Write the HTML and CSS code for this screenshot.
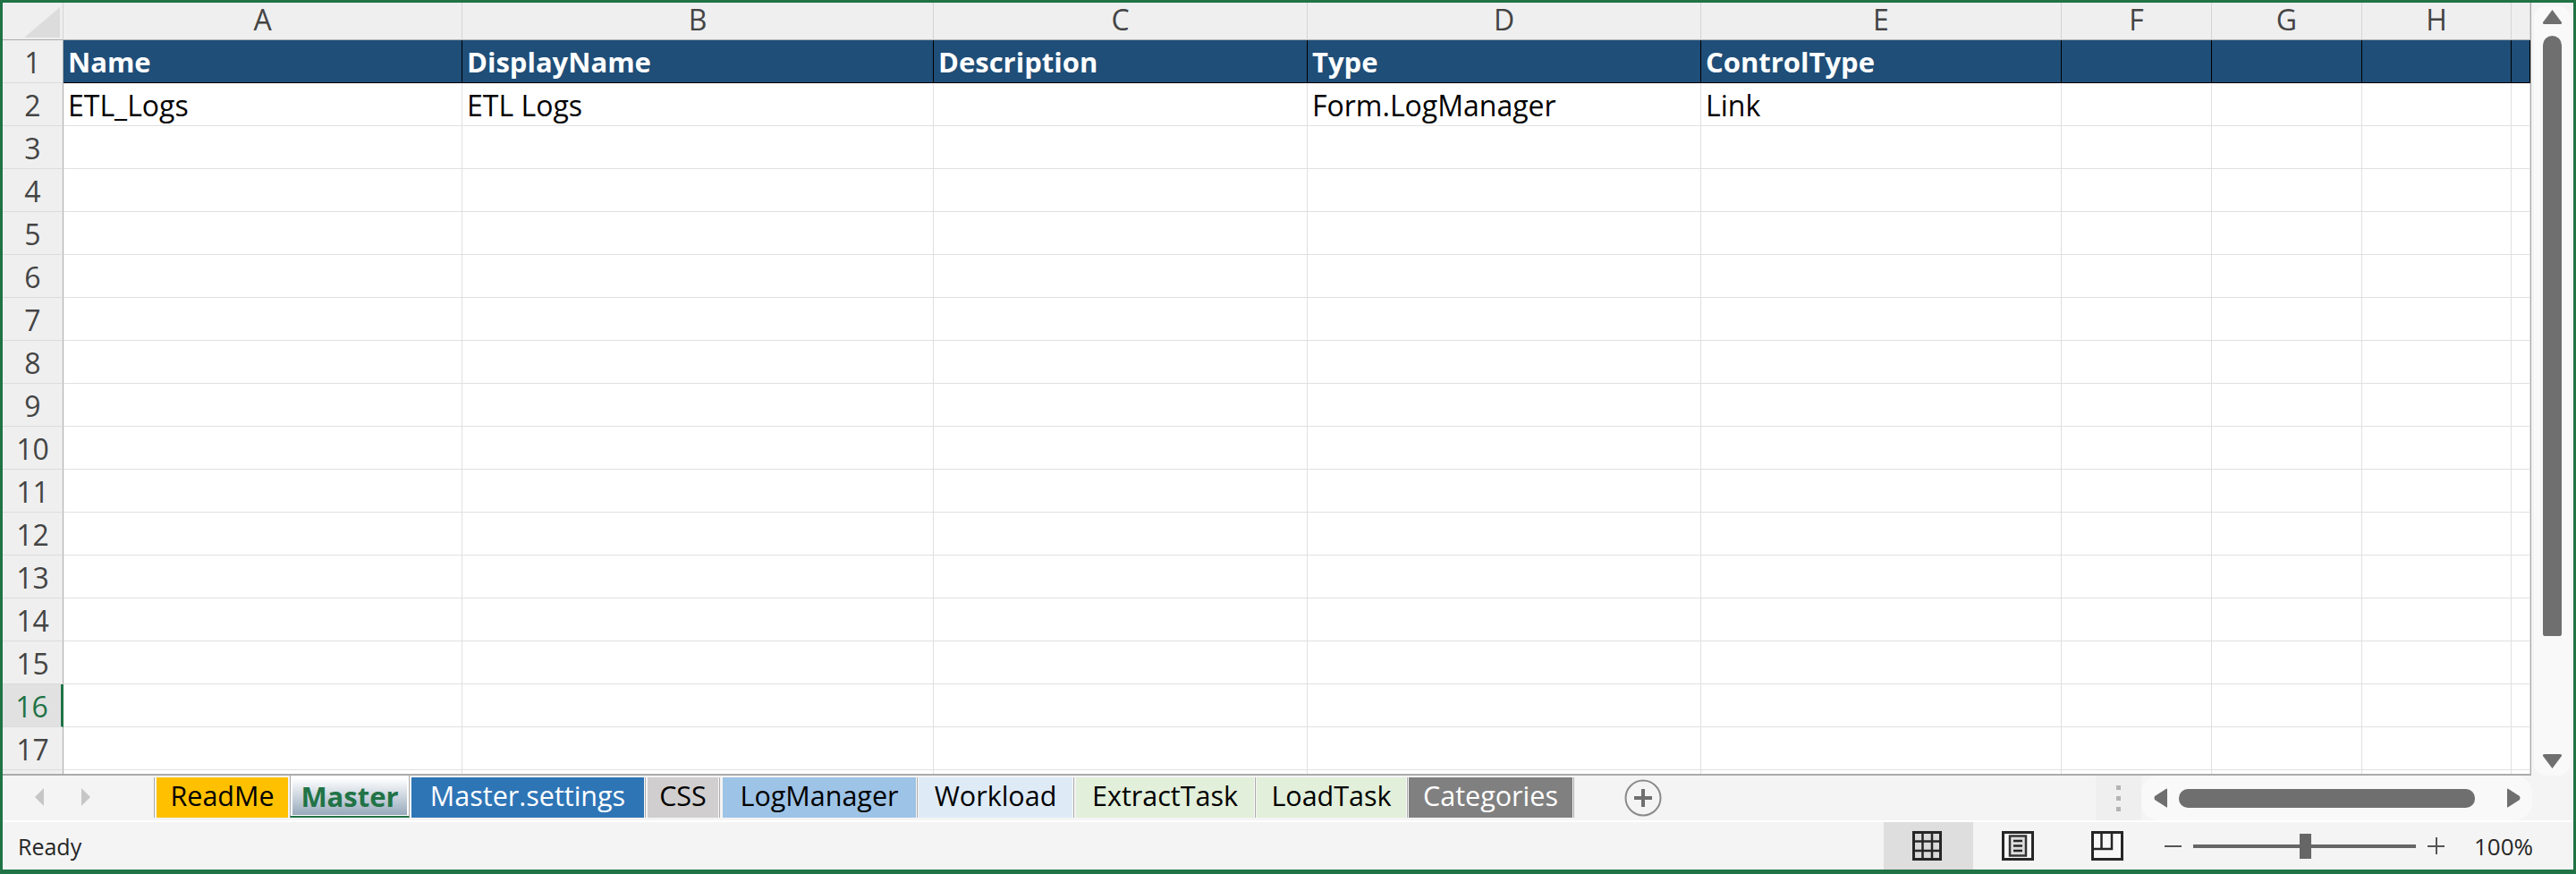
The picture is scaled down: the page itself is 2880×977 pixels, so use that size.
FILE: index.html
```html
<!DOCTYPE html>
<html lang="en">
<head>
  <meta charset="UTF-8">
  <meta name="viewport" content="width=device-width, initial-scale=1.0">
  <title>Master - Excel</title>
  <link rel="stylesheet" href="styles.css">
</head>
<body>
<div class="window">
  <div class="sheet-area">
    <div class="grid">
      <div class="corner"><span class="corner-tri"></span></div>
      <div class="col-head">A</div>
      <div class="col-head">B</div>
      <div class="col-head">C</div>
      <div class="col-head">D</div>
      <div class="col-head">E</div>
      <div class="col-head">F</div>
      <div class="col-head">G</div>
      <div class="col-head">H</div>
      <div class="col-head"></div>

      <div class="row-head">1</div>
      <div class="cell title">Name</div>
      <div class="cell title">DisplayName</div>
      <div class="cell title">Description</div>
      <div class="cell title">Type</div>
      <div class="cell title">ControlType</div>
      <div class="cell title"></div>
      <div class="cell title"></div>
      <div class="cell title"></div>
      <div class="cell title"></div>

      <div class="row-head">2</div>
      <div class="cell">ETL_Logs</div>
      <div class="cell">ETL Logs</div>
      <div class="cell"></div>
      <div class="cell">Form.LogManager</div>
      <div class="cell">Link</div>
      <div class="cell"></div>
      <div class="cell"></div>
      <div class="cell"></div>
      <div class="cell"></div>

      <div class="row-head">3</div><div class="cell"></div><div class="cell"></div><div class="cell"></div><div class="cell"></div><div class="cell"></div><div class="cell"></div><div class="cell"></div><div class="cell"></div><div class="cell"></div>
      <div class="row-head">4</div><div class="cell"></div><div class="cell"></div><div class="cell"></div><div class="cell"></div><div class="cell"></div><div class="cell"></div><div class="cell"></div><div class="cell"></div><div class="cell"></div>
      <div class="row-head">5</div><div class="cell"></div><div class="cell"></div><div class="cell"></div><div class="cell"></div><div class="cell"></div><div class="cell"></div><div class="cell"></div><div class="cell"></div><div class="cell"></div>
      <div class="row-head">6</div><div class="cell"></div><div class="cell"></div><div class="cell"></div><div class="cell"></div><div class="cell"></div><div class="cell"></div><div class="cell"></div><div class="cell"></div><div class="cell"></div>
      <div class="row-head">7</div><div class="cell"></div><div class="cell"></div><div class="cell"></div><div class="cell"></div><div class="cell"></div><div class="cell"></div><div class="cell"></div><div class="cell"></div><div class="cell"></div>
      <div class="row-head">8</div><div class="cell"></div><div class="cell"></div><div class="cell"></div><div class="cell"></div><div class="cell"></div><div class="cell"></div><div class="cell"></div><div class="cell"></div><div class="cell"></div>
      <div class="row-head">9</div><div class="cell"></div><div class="cell"></div><div class="cell"></div><div class="cell"></div><div class="cell"></div><div class="cell"></div><div class="cell"></div><div class="cell"></div><div class="cell"></div>
      <div class="row-head">10</div><div class="cell"></div><div class="cell"></div><div class="cell"></div><div class="cell"></div><div class="cell"></div><div class="cell"></div><div class="cell"></div><div class="cell"></div><div class="cell"></div>
      <div class="row-head">11</div><div class="cell"></div><div class="cell"></div><div class="cell"></div><div class="cell"></div><div class="cell"></div><div class="cell"></div><div class="cell"></div><div class="cell"></div><div class="cell"></div>
      <div class="row-head">12</div><div class="cell"></div><div class="cell"></div><div class="cell"></div><div class="cell"></div><div class="cell"></div><div class="cell"></div><div class="cell"></div><div class="cell"></div><div class="cell"></div>
      <div class="row-head">13</div><div class="cell"></div><div class="cell"></div><div class="cell"></div><div class="cell"></div><div class="cell"></div><div class="cell"></div><div class="cell"></div><div class="cell"></div><div class="cell"></div>
      <div class="row-head">14</div><div class="cell"></div><div class="cell"></div><div class="cell"></div><div class="cell"></div><div class="cell"></div><div class="cell"></div><div class="cell"></div><div class="cell"></div><div class="cell"></div>
      <div class="row-head">15</div><div class="cell"></div><div class="cell"></div><div class="cell"></div><div class="cell"></div><div class="cell"></div><div class="cell"></div><div class="cell"></div><div class="cell"></div><div class="cell"></div>
      <div class="row-head active">16</div><div class="cell"></div><div class="cell"></div><div class="cell"></div><div class="cell"></div><div class="cell"></div><div class="cell"></div><div class="cell"></div><div class="cell"></div><div class="cell"></div>
      <div class="row-head">17</div><div class="cell"></div><div class="cell"></div><div class="cell"></div><div class="cell"></div><div class="cell"></div><div class="cell"></div><div class="cell"></div><div class="cell"></div><div class="cell"></div>
      <div class="row-head stub"></div><div class="cell stub"></div><div class="cell stub"></div><div class="cell stub"></div><div class="cell stub"></div><div class="cell stub"></div><div class="cell stub"></div><div class="cell stub"></div><div class="cell stub"></div><div class="cell stub"></div>
    </div>
    <div class="vscroll">
      <svg class="varrow" width="23" height="18" viewBox="0 0 23 18"><path d="M11.500 1 L22 15 Q22.500 17 20 17 L3 17 Q0.500 17 1 15 Z" fill="#6f6f6f"/></svg>
      <div class="vthumb"></div>
      <svg class="varrow down" width="23" height="18" viewBox="0 0 23 18"><path d="M11.500 17 L22 3 Q22.500 1 20 1 L3 1 Q0.500 1 1 3 Z" fill="#6f6f6f"/></svg>
    </div>
  </div>

  <div class="tabbar">
    <div class="tab-nav">
      <svg width="10" height="20" viewBox="0 0 10 20"><path d="M10 0 V20 L0 10 Z" fill="#c6c6c6"/></svg>
      <svg width="10" height="20" viewBox="0 0 10 20"><path d="M0 0 V20 L10 10 Z" fill="#c6c6c6"/></svg>
    </div>
    <div class="tabs">
      <div class="tab tab-readme">ReadMe</div>
      <div class="tab tab-master">Master</div>
      <div class="tab tab-settings">Master.settings</div>
      <div class="tab tab-css">CSS</div>
      <div class="tab tab-log">LogManager</div>
      <div class="tab tab-workload">Workload</div>
      <div class="tab tab-extract">ExtractTask</div>
      <div class="tab tab-load">LoadTask</div>
      <div class="tab tab-cat">Categories</div>
    </div>
    <svg class="add-sheet" width="42" height="42" viewBox="0 0 42 42">
      <circle cx="21" cy="21" r="19.500" fill="none" stroke="#8a8a8a" stroke-width="2"/>
      <path d="M21 11 V31 M11 21 H31" stroke="#6f6f6f" stroke-width="4"/>
    </svg>
    <div class="tab-split"><i></i><i></i><i></i></div>
    <div class="hscroll">
      <svg width="15" height="22" viewBox="0 0 15 22"><path d="M15 1 V21 Q15 22 13.500 21 L1 13 Q0 11 1 9 L13.500 1 Q15 0 15 1 Z" fill="#6f6f6f"/></svg>
      <div class="hthumb"></div>
      <svg width="15" height="22" viewBox="0 0 15 22"><path d="M0 1 V21 Q0 22 1.500 21 L14 13 Q15 11 14 9 L1.500 1 Q0 0 0 1 Z" fill="#6f6f6f"/></svg>
    </div>
  </div>

  <div class="statusbar">
    <div class="status-text">Ready</div>
    <div class="view-btn on">
      <svg class="icon-normal" width="33" height="33" viewBox="0 0 33 33">
        <rect x="1.500" y="1.500" width="30" height="30" fill="#d9d9d9" stroke="#262626" stroke-width="3"/>
        <path d="M11.500 1 V32 M22 1 V32 M1 11.500 H32 M1 22 H32" stroke="#262626" stroke-width="2.500"/>
      </svg>
    </div>
    <div class="view-btn">
      <svg width="36" height="33" viewBox="0 0 36 33">
        <rect x="1.500" y="1.500" width="33" height="30" fill="#f8f8f8" stroke="#262626" stroke-width="3"/>
        <rect x="9" y="5.500" width="18" height="22" fill="#dcdcdc" stroke="#333" stroke-width="2.500"/>
        <path d="M13 11 H23 M13 16.500 H23 M13 22 H23" stroke="#262626" stroke-width="2.500"/>
      </svg>
    </div>
    <div class="view-btn">
      <svg width="36" height="33" viewBox="0 0 36 33">
        <rect x="1.500" y="1.500" width="33" height="30" fill="#f8f8f8" stroke="#262626" stroke-width="3"/>
        <path d="M1 20 H23 V1 M11.500 1 V20" fill="none" stroke="#262626" stroke-width="2.500"/>
      </svg>
    </div>
    <div class="zoom-control">
      <span class="zoom-minus"></span>
      <div class="zoom-track"><span class="zoom-thumb"></span></div>
      <span class="zoom-plus"></span>
    </div>
    <div class="zoom-value">100%</div>
  </div>
</div>
</body>
</html>
```

FILE: styles.css
```css
* {
  box-sizing: border-box;
}

html, body {
  margin: 0;
  padding: 0;
  background: #f4f4f4;
}

body {
  font-family: "Open Sans", "Noto Sans", sans-serif;
  width: 2880px;
  height: 977px;
  overflow: hidden;
}

.window {
  width: 2880px;
  height: 977px;
  border: solid #217346;
  border-width: 3px 3px 5px 3px;
  background: #fff;
  display: flex;
  flex-direction: column;
}

/* sheet */
.sheet-area {
  display: flex;
  height: 864px;
  background: #f4f4f4;
}

.grid {
  width: 2827px;
  display: grid;
  grid-template-columns: 68px 446px 527px 418px 440px 403px 168px 168px 167px 21px;
  grid-template-rows: 42px repeat(17, 48px) 4px;
  background: #fff;
  border-right: 1px solid #ababab;
  border-bottom: 2px solid #ababab;
  height: 864px;
}

.corner {
  background: #efefef;
  border-bottom: 1px solid #ababab;
  border-right: 1px solid #d4d4d4;
  display: flex;
  align-items: flex-end;
  justify-content: flex-end;
  padding: 0 3px 2px 0;
}

.corner-tri {
  width: 40px;
  height: 34px;
  background: #dcdcdc;
  clip-path: polygon(100% 0, 100% 100%, 0 100%);
}

.col-head {
  background: #efefef;
  border-bottom: 1px solid #ababab;
  border-right: 1px solid #d4d4d4;
  color: #444;
  font-size: 32px;
  text-align: center;
  line-height: 38px;
}

.col-head:last-child {
  border-right: none;
}

.row-head {
  background: #efefef;
  border-right: 1px solid #ababab;
  border-bottom: 1px solid #dcdcdc;
  color: #444;
  font-size: 32px;
  text-align: center;
  line-height: 49px;
}

.row-head.active {
  background: #e1e1e1;
  border-right: 3px solid #217346;
  color: #217346;
}

.row-head.stub, .cell.stub {
  border-bottom: none;
}

.cell {
  border-right: 1px solid #e0e0e0;
  border-bottom: 1px solid #e0e0e0;
  font-size: 32px;
  line-height: 44px;
  padding: 3px 0 0 5px;
  color: #000;
  white-space: nowrap;
  overflow: hidden;
}

.cell.title {
  background: #1f4e78;
  color: #fff;
  font-size: 31px;
  font-weight: 700;
  line-height: 46px;
  padding-top: 1px;
  border-right: 1px solid #000;
  border-bottom: 1px solid #000;
}

/* vertical scrollbar */
.vscroll {
  flex: 1;
  display: flex;
  flex-direction: column;
  align-items: center;
  margin: 4px 3px 0 3px;
  padding: 3px 0 7px 0;
  background: #f9f9f9;
  border-radius: 14px;
}

.vthumb {
  width: 21px;
  height: 671px;
  margin-top: 12px;
  border-radius: 11px 11px 3px 3px;
  background: #6f6f6f;
}

.varrow.down {
  margin-top: auto;
}

/* sheet tabs */
.tabbar {
  height: 50px;
  display: flex;
  align-items: flex-start;
  background: #f4f4f4;
}

.tab-nav {
  width: 170px;
  height: 45px;
  margin-top: 2px;
  padding: 12px 0 0 36px;
  display: flex;
  gap: 42px;
  border-right: 1px solid #ababab;
}

.tabs {
  display: flex;
  align-items: flex-start;
  padding-left: 2px;
}

.tab {
  height: 45px;
  margin-top: 2px;
  font-size: 30.500px;
  line-height: 41px;
  text-align: center;
  white-space: nowrap;
  color: #000;
  box-shadow: 1px 0 0 #f9f9f9, 2px 0 0 #ababab;
}

.tab-readme { width: 147px; margin-right: 2px; background: #ffc000; box-shadow: none; }
.tab-master {
  width: 134px;
  height: 48px;
  margin: -1px 2px 0 0;
  padding: 3px 2px 1px 2px;
  font-weight: 700;
  font-size: 31px;
  line-height: 41px;
  color: #217346;
  background: linear-gradient(#fff, #97a9bc) content-box, #fff;
  border: solid #ababab;
  border-width: 1px 1px 0 1px;
  border-bottom: 2px solid #217346;
  box-shadow: none;
}
.tab-settings { width: 260px; margin-right: 4px; background: #2e75b6; color: #fff; }
.tab-css { width: 79px; margin-right: 5px; background: #d0cece; }
.tab-log { width: 216px; margin-right: 3px; background: #9dc3e6; }
.tab-workload { width: 172px; margin-right: 4px; background: #deebf7; }
.tab-extract { width: 199px; margin-right: 3px; background: #e2efda; }
.tab-load { width: 167px; margin-right: 3px; background: #e2efda; }
.tab-cat { width: 183px; background: #808080; color: #fff; }

.add-sheet {
  margin: 4px 0 0 58px;
}

.tab-split {
  margin-left: auto;
  width: 51px;
  height: 50px;
  background: #efefef;
  display: flex;
  flex-direction: column;
  align-items: center;
  justify-content: center;
  gap: 7px;
}

.tab-split i {
  width: 5px;
  height: 5px;
  background: #b4b4b4;
}

.hscroll {
  width: 437px;
  height: 50px;
  margin-right: 46px;
  padding: 0 13px 0 14px;
  background: #f9f9f9;
  border-radius: 20px;
  display: flex;
  align-items: center;
  gap: 13px;
}

.hthumb {
  flex: 1;
  height: 21px;
  margin-right: 23px;
  background: #6f6f6f;
  border-radius: 10px;
}

/* status bar */
.statusbar {
  flex: 1;
  display: flex;
  align-items: center;
  margin-top: 2px;
  background: #f4f4f4;
  color: #262626;
}

.status-text {
  font-size: 25px;
  padding-left: 17px;
  margin-right: auto;
}

.view-btn {
  width: 100px;
  height: 53px;
  display: flex;
  align-items: center;
  justify-content: center;
}

.view-btn.on {
  background: #dedede;
}

.icon-normal {
  margin-right: 3px;
}

.zoom-control {
  display: flex;
  align-items: center;
  gap: 13px;
  margin-left: 14px;
}

.zoom-minus {
  width: 19px;
  height: 2px;
  background: #555;
}

.zoom-track {
  width: 249px;
  height: 4px;
  background: #666;
  display: flex;
  align-items: center;
  justify-content: center;
}

.zoom-thumb {
  width: 13px;
  height: 28px;
  margin-left: 2px;
  flex: none;
  background: #666;
}

.zoom-plus {
  width: 19px;
  height: 19px;
  background:
    linear-gradient(#555, #555) center / 100% 2px no-repeat,
    linear-gradient(#555, #555) center / 2px 100% no-repeat;
}

.zoom-value {
  font-size: 26px;
  width: 64px;
  margin-left: 33px;
  margin-right: 47px;
  white-space: nowrap;
}
```
